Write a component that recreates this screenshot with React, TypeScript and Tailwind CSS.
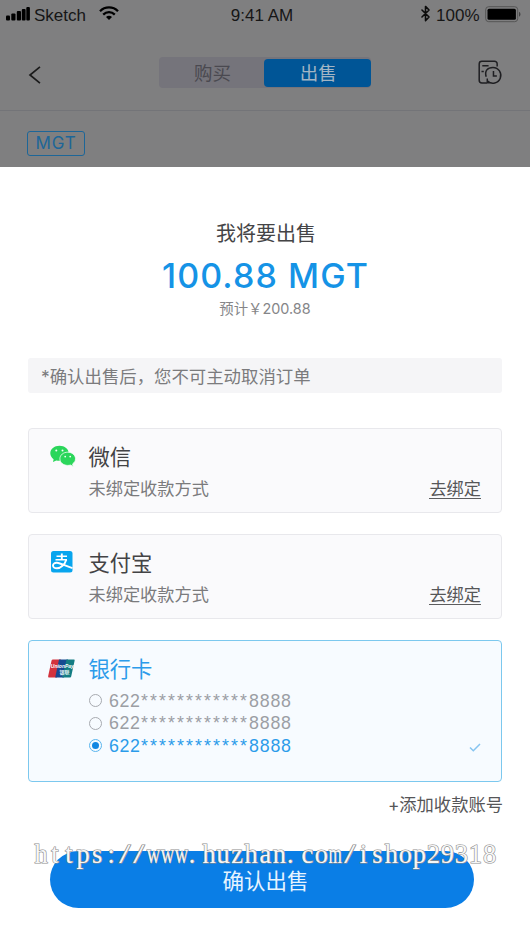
import clsx from "clsx";
import { Bluetooth } from "lucide-react";

const cards = ["622************8888", "622************8888", "622************8888"];
const siteUrl = "https://www.huzhan.com/ishop29318";

const StatusBar = () => (
  <div className="flex h-[30px] items-center pl-[6px] pr-[9px] font-['Liberation_Sans',sans-serif] text-[16.5px] text-[#161616]">
    <div className="flex w-[189px] items-center">
      <svg width="25" height="16" viewBox="0 0 25 16" className="-mt-[3px] fill-black">
        <rect x="0" y="9.5" width="4" height="5" rx="1" />
        <rect x="5.3" y="7.5" width="4.2" height="7" rx="1" />
        <rect x="10.8" y="5" width="4.2" height="9.5" rx="1" />
        <rect x="15.8" y="3" width="3.8" height="11.5" rx="1" />
        <rect x="20.3" y="1" width="3.6" height="13.5" rx="1" />
      </svg>
      <span className="ml-[3px] mt-px w-[52px] text-[17px]">Sketch</span>
      <svg width="20" height="15" viewBox="0 0 20 15" className="-mt-[4px] ml-[13px] fill-none stroke-black stroke-[2.3]">
        <path d="M1 5.2C6 .2 14 .2 19 5.2" />
        <path d="M4.2 8.6c3.3-3.2 8.3-3.2 11.6 0" />
        <path d="M7 10.9c1.8-1.6 4.2-1.6 6 0l-3 3z" className="fill-black stroke-none" />
      </svg>
    </div>
    <div className="w-[134px] pt-[2px] text-center text-[17px]">9:41 AM</div>
    <div className="flex flex-1 items-center justify-end">
      <Bluetooth size={17} strokeWidth={2.2} className="-mt-[4px] mr-[2px] text-[#0c0c0c]" />
      <span className="mr-[5px] pt-px text-[17px]">100%</span>
      <svg width="36" height="17" viewBox="0 0 36 17" className="-mt-[2px]">
        <rect x=".7" y=".7" width="32" height="15" rx="3" fill="none" stroke="#555" />
        <rect x="2.5" y="2.7" width="28.4" height="11" rx="1.5" fill="#000" />
        <path d="M34 5.7c2 1.2 2 3.8 0 5z" fill="#444" />
      </svg>
    </div>
  </div>
);

const Header = () => (
  <div className="flex h-[81px] items-start border-b border-[#737478] pl-[28px] pr-[27px] pt-[27px]">
    <svg width="14" height="20" viewBox="0 0 14 20" className="mt-[8px] fill-none stroke-[#1b1b1b] stroke-[1.7]">
      <path d="M12 1.8L2 10l10 8.2" />
    </svg>
    <div className="ml-[117px] flex h-[31px] w-[212px] items-center rounded-[4px] bg-[#75747b] text-[18.5px]">
      <div className="w-[105px] pl-[2px] pt-[3px] text-center text-[#4a4950]">购买</div>
      <div className="flex h-[28px] flex-1 items-center justify-center rounded-[4px] bg-[#005596] pl-[2px] pt-[3px] text-[#a3b5c4]">
        出售
      </div>
    </div>
    <svg width="25" height="25" viewBox="0 0 25 25" className="ml-[107px] mt-[3px] fill-none stroke-[#1f1f22] stroke-[1.5]">
      <path d="M19.2 6.5V4c0-1.7-1-2.8-2.8-2.8H3.9C2.2 1.2 1.2 2.2 1.2 3.9v16.4c0 1.7 1 2.7 2.7 2.7h5" />
      <path d="M4.3 5.7h6.3M3.5 11.6h2.3" />
      <path d="M8.2 16.8c-1.8-6 1.3-9.4 6.8-9.4a7.9 7.9 0 1 1-5.4 13.7M9.3 18.5v4.2h4" />
      <path d="M15.5 11v5h3.4" />
    </svg>
  </div>
);

const WechatIcon = () => (
  <svg width="26" height="22" viewBox="0 0 26 22" className="ml-px">
    <path
      d="M9.5.8C4.3.8.3 4 .3 8.3c0 2.4 1.3 4.5 3.3 5.9L3 17l3.3-1.6c1 .3 2 .4 3.2.4 5.2 0 9.2-3.2 9.2-7.5S14.7.8 9.5.8z"
      fill="#2bd65b"
    />
    <path
      d="M17.7 7.2c-4.3 0-7.8 2.8-7.8 6.6s3.5 6.6 7.8 6.600c1 0 1.900-.1 2.700-.4l2.800 1.400-.6-2.500c1.800-1.200 2.900-3 2.900-5.100 0-3.800-3.500-6.600-7.800-6.600z"
      fill="#2bd65b"
      stroke="#f6fcf8"
      strokeWidth=".8"
    />
    <g fill="#f4fff7">
      <circle cx="6.3" cy="5.5" r="1" />
      <circle cx="12.5" cy="5.5" r="1" />
      <circle cx="15.2" cy="11.6" r=".9" />
      <circle cx="20.2" cy="11.6" r=".9" />
    </g>
  </svg>
);

const AlipayIcon = () => (
  <svg width="22" height="22" viewBox="0 0 22 22" className="-mt-[1px] ml-[2px]">
    <rect width="21.5" height="21.5" rx="2.5" fill="#08a5ee" />
    <path d="M5.5 5.3h10.500M4.500 8.700h11.500" stroke="#fff" strokeWidth="1.5" />
    <path
      d="M10.800 2.500v6M15.300 8.700c-1.500 4.800-5.500 8.600-9.300 8.600-2.600 0-4-1.200-4-2.800 0-1.700 1.700-2.900 3.900-2.700 4.100.3 9.300 3.800 15.600 5.400"
      fill="none"
      stroke="#fff"
      strokeWidth="1.9"
    />
  </svg>
);

const UnionPay = () => (
  <svg width="27" height="19" viewBox="0 0 27 19" className="-mt-[2px] mr-[14px]">
    <path d="M5 .5h8l-4 18H1.2C.4 18.5 0 18 .2 17L3.5 1.7C3.7.9 4.2.5 5 .5z" fill="#d3323d" />
    <path d="M11 .5h9l-4 18H7.2z" fill="#164a91" />
    <path d="M18.5.5h7.2c.8 0 1.1.5.9 1.3L23.3 17c-.2 1-.8 1.5-1.6 1.5h-7.5z" fill="#147d83" />
    <text x="2.8" y="8.7" fontSize="5" fontWeight="700" fontStyle="italic" fill="#fff" fontFamily="Liberation Sans, sans-serif">
      UnionPay
    </text>
    <text x="11.5" y="14.6" fontSize="5" fontWeight="700" fill="#e3f4f6" fontFamily="Noto Sans CJK SC, sans-serif">
      银联
    </text>
  </svg>
);

const PayCard = ({ icon, name }: { icon: React.ReactNode; name: string }) => (
  <div className="flex h-[85px] rounded-[4px] border border-[#e8e8ec] bg-[#fafafc] pl-[20px] pr-[20px]">
    <div className="mt-[14px] flex h-[26px] w-[39.5px] items-center">{icon}</div>
    <div className="flex-1">
      <div className="mt-[12px] h-[32px] text-[21.3px] leading-[32px] text-[#434345]">{name}</div>
      <div className="flex h-[32px] items-center justify-between text-[17.2px] text-[#7b7b7d]">
        <span>未绑定收款方式</span>
        <span className="h-[20px] border-b border-[#5c5c5e] leading-[20px] text-[#565658]">去绑定</span>
      </div>
    </div>
  </div>
);

const CardRow = ({ number, active }: { number: string; active: boolean }) => (
  <div className={clsx("flex h-[22.7px] items-center", active ? "text-[#2b9bea]" : "text-[#9b9ea4]")}>
    <span
      className={clsx(
        "mr-[7px] flex size-[13px] items-center justify-center rounded-full border",
        active ? "border-[#5ab5ee]" : "border-[#a7aab0]"
      )}
    >
      {active && <span className="size-[7px] rounded-full bg-[#1287e2]" />}
    </span>
    <span className="flex pt-px font-['Liberation_Sans',sans-serif] text-[17.8px]">
      <span className="w-[32px] tracking-[0.6px]">{number.slice(0, 3)}</span>
      <span className="w-[108px] tracking-[2.07px]">{number.slice(3, 15)}</span>
      <span className="tracking-[0.8px]">{number.slice(15)}</span>
    </span>
    {active && (
      <svg width="12" height="9" viewBox="0 0 12 9" className="ml-auto mt-[4px] fill-none stroke-[#86c4f0] stroke-[1.5]">
        <path d="M1 4.5l3.3 3.3L11 1" />
      </svg>
    )}
  </div>
);

const Watermark = () => (
  <div className="pointer-events-none absolute left-[34px] top-[838px] flex h-[32px] font-['Liberation_Serif',serif] text-[26.5px] leading-[32px] text-[#f7f7f7] [-webkit-text-stroke:1.2px_#8c8c8c] [paint-order:stroke]">
    {siteUrl.split("").map((c, i) => (
      <span key={i} className="flex w-[14.02px] justify-center">
        <span
          className={clsx(
            "inline-block",
            c === "w" && "scale-x-[0.7]",
            c === "m" && "scale-x-[0.65]",
            c === "/" && "scale-x-[1.5]",
            c === "." && "-translate-x-[3px]"
          )}
        >
          {c}
        </span>
      </span>
    ))}
  </div>
);

export default function App() {
  return (
    <div className="relative h-[941px] w-[530px] overflow-hidden bg-white font-['Inter','Noto_Sans_CJK_SC',sans-serif]">
      <div className="h-[167px] w-[529.5px] bg-[#7f7f80]">
        <StatusBar />
        <Header />
        <div className="ml-[27px] mt-[20px] flex h-[25px] w-[58px] items-center justify-center rounded-[3px] border border-[#1d6698] pt-px text-[17px] tracking-[0.8px] text-[#1d6698]">
          MGT
        </div>
      </div>

      <div className="flex flex-col px-[28px] pt-[52px]">
        <div className="flex flex-col items-center">
          <div className="h-[30px] pl-[2px] text-[20px] leading-[30px] text-[#444446]">我将要出售</div>
          <div className="mt-[6px] h-[42px] pl-px text-[34px] font-[450] leading-[42px] tracking-[1.1px] text-[#1593e6]">
            100.88 MGT
          </div>
          <div className="mt-[1px] h-[22px] text-[14.4px] leading-[22px] text-[#858588]">预计￥200.88</div>
        </div>

        <div className="mt-[38px] flex h-[35px] items-center rounded-[3px] bg-[#f5f5f7] pl-[13px] pt-[3px] text-[17.4px] text-[#7b7b7d]">
          *确认出售后，您不可主动取消订单
        </div>

        <div className="mt-[35px] flex flex-col gap-[21px]">
          <PayCard name="微信" icon={<WechatIcon />} />
          <PayCard name="支付宝" icon={<AlipayIcon />} />
          <div className="h-[142px] rounded-[4px] border border-[#7cc8ee] bg-[#f7fbff] pl-[19px] pr-[20px]">
            <div className="mt-[12px] flex h-[32px] items-center text-[21.3px] leading-[32px] text-[#2b9bea]">
              <UnionPay />
              <span className="-ml-[0.5px]">银行卡</span>
            </div>
            <div className="ml-[41px] mt-[4px]">
              {cards.map((number, i) => (
                <CardRow key={i} number={number} active={i === 2} />
              ))}
            </div>
          </div>
        </div>

        <div className="-mr-px mt-[10px] flex h-[26px] items-center justify-end text-[17.3px] text-[#565658]">
          +添加收款账号
        </div>
        <button className="ml-[22px] mt-[33px] h-[57px] w-[424px] rounded-full bg-[#0a7ee6] pl-[7px] pt-[3px] text-[21.5px] text-[#e6f3ff]">
          确认出售
        </button>
      </div>
      <Watermark />
    </div>
  );
}
